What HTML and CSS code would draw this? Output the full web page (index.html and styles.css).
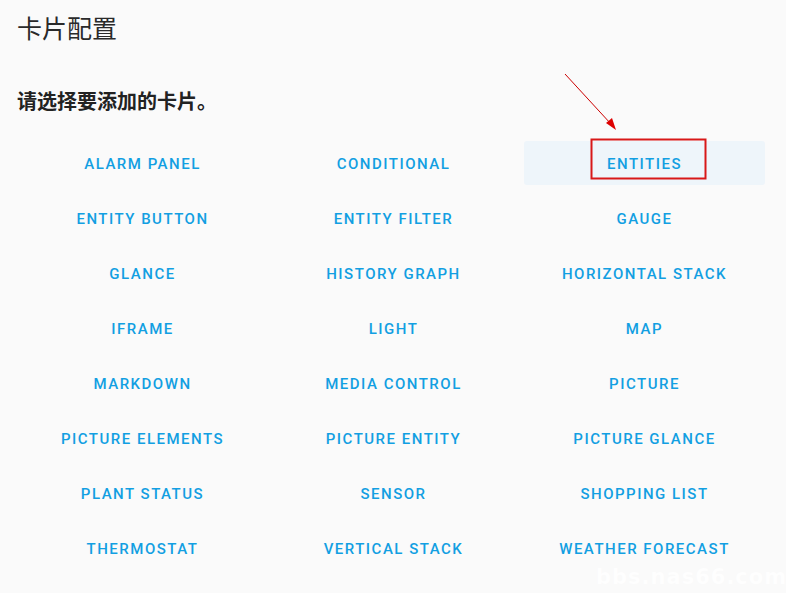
FILE: index.html
```html
<!DOCTYPE html>
<html lang="zh">
<head>
<meta charset="utf-8">
<link rel="stylesheet" href="styles.css">
</head>
<body>
<div class="page">
  <h1 class="title">卡片配置</h1>
  <p class="prompt">请选择要添加的卡片。</p>
  <div class="grid">
    <button class="card-btn">Alarm panel</button>
    <button class="card-btn">Conditional</button>
    <button class="card-btn active">Entities</button>
    <button class="card-btn">Entity button</button>
    <button class="card-btn">Entity filter</button>
    <button class="card-btn">Gauge</button>
    <button class="card-btn">Glance</button>
    <button class="card-btn">History graph</button>
    <button class="card-btn">Horizontal stack</button>
    <button class="card-btn">iFrame</button>
    <button class="card-btn">Light</button>
    <button class="card-btn">Map</button>
    <button class="card-btn">Markdown</button>
    <button class="card-btn">Media control</button>
    <button class="card-btn">Picture</button>
    <button class="card-btn">Picture elements</button>
    <button class="card-btn">Picture entity</button>
    <button class="card-btn">Picture glance</button>
    <button class="card-btn">Plant status</button>
    <button class="card-btn">Sensor</button>
    <button class="card-btn">Shopping list</button>
    <button class="card-btn">Thermostat</button>
    <button class="card-btn">Vertical stack</button>
    <button class="card-btn">Weather forecast</button>
  </div>
  <svg class="annot" width="786" height="593" viewBox="0 0 786 593" aria-hidden="true">
    <line x1="565" y1="74" x2="611" y2="124" stroke="#c00" stroke-width="1"/>
    <polygon points="616,130 606,123 612,118" fill="#d00"/>
    <rect x="591.5" y="139.5" width="114" height="39" fill="none" stroke="#d81818" stroke-width="2"/>
  </svg>
  <div class="watermark">bbs.nas66.com</div>
</div>
</body>
</html>
```
FILE: styles.css
```css
html, body {
  margin: 0;
  padding: 0;
  background: #fafafa;
}
body {
  width: 786px;
  height: 593px;
  overflow: hidden;
  font-family: Roboto, "Noto Sans CJK SC", sans-serif;
}
.page {
  position: relative;
  padding: 11px 22px 0 22px;
  height: 593px;
  box-sizing: border-box;
}
.title {
  margin: 0 0 0 -5px;
  font-size: 25px;
  font-weight: 400;
  line-height: 32px;
  color: #2a2a2a;
  font-family: "Noto Sans CJK SC", sans-serif;
}
.prompt {
  margin: 45px 0 0 -5px;
  font-size: 20px;
  font-weight: 700;
  line-height: 26px;
  color: #222;
  font-family: "Noto Sans CJK SC", sans-serif;
}
.grid {
  margin-top: 27px;
  display: grid;
  grid-template-columns: repeat(3, 241px);
  column-gap: 10px;
  row-gap: 11px;
}
.card-btn {
  height: 44px;
  border: none;
  background: transparent;
  font-family: Roboto, sans-serif;
  font-weight: 500;
  font-size: 15px;
  letter-spacing: 1.5px;
  text-transform: uppercase;
  color: #129fe2;
  padding: 2px 0 0 0;
  border-radius: 3px;
}
.card-btn.active {
  background: #eef5fa;
}
.annot {
  position: absolute;
  left: 0;
  top: 0;
  pointer-events: none;
}
.watermark {
  position: absolute;
  left: 596px;
  top: 565px;
  font-family: "DejaVu Sans", sans-serif;
  font-weight: 700;
  font-size: 21px;
  letter-spacing: 1px;
  color: #ffffff;
  opacity: 0.85;
}
```
